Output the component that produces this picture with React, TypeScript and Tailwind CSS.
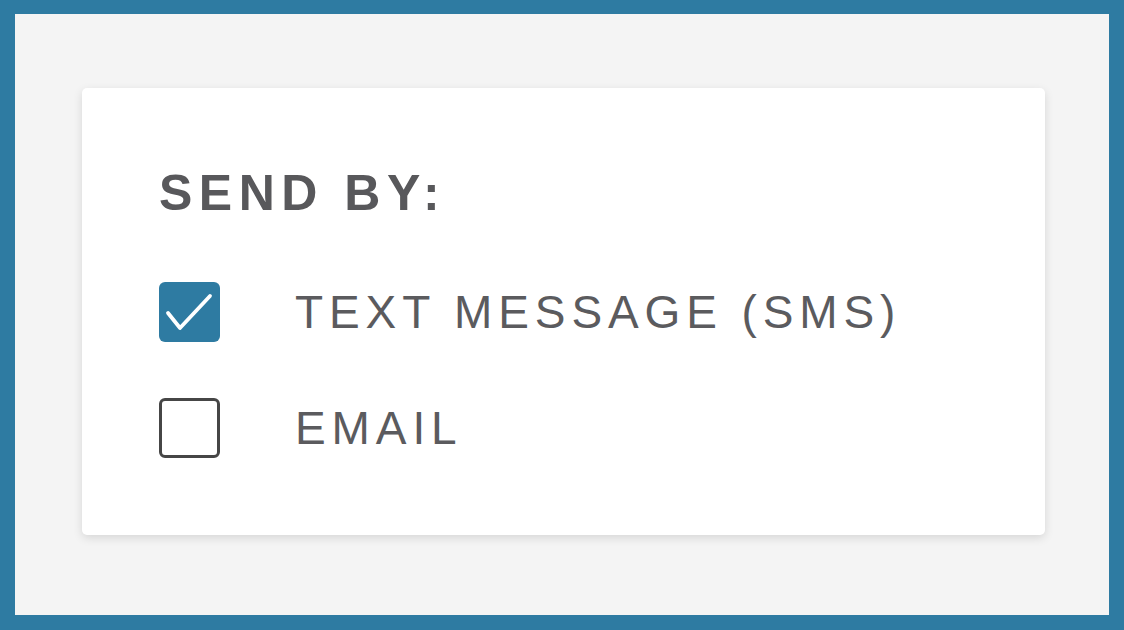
import React from "react";

export default function App() {
  return (
    <div
      className="w-[1124px] h-[630px] bg-[#2e7ba2] p-[15px] pt-[14px]"
      style={{ fontFamily: '"Liberation Sans", Arial, sans-serif' }}
    >
      <div className="w-full h-full bg-[#f4f4f4] pl-[67px] pt-[74px]">
        <div className="w-[963px] h-[447px] bg-white rounded-[5px] shadow-[0_3px_10px_rgba(0,0,0,0.12)] pl-[77px] pt-[80px]">
          <h2 className="text-[50px] leading-[50px] font-bold tracking-[6.5px] text-[#58585b]">
            SEND BY:
          </h2>
          <div className="mt-[64px] flex flex-col gap-[56px]">
            <label className="flex items-center gap-[75px]">
              <span className="w-[61px] h-[60px] rounded-[6px] bg-[#2e7ba2] flex">
                <svg width="61" height="60" viewBox="0 0 61 60" fill="none">
                  <path
                    d="M9 31 L21 46 L51 14"
                    stroke="white"
                    strokeWidth="3.8"
                    strokeLinecap="round"
                    strokeLinejoin="round"
                  />
                </svg>
              </span>
              <span className="text-[46px] leading-[46px] tracking-[5.9px] text-[#5b5b5e]">
                TEXT MESSAGE (SMS)
              </span>
            </label>
            <label className="flex items-center gap-[75px]">
              <span className="w-[61px] h-[60px] rounded-[6px] border-[3.5px] border-[#464646] bg-white" />
              <span className="text-[46px] leading-[46px] tracking-[5.9px] text-[#5b5b5e]">
                EMAIL
              </span>
            </label>
          </div>
        </div>
      </div>
    </div>
  );
}
